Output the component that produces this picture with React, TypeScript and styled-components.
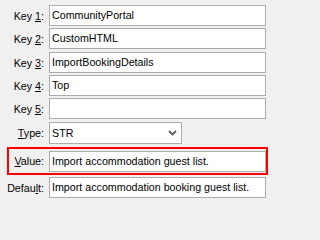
import React from "react";
import styled, { createGlobalStyle } from "styled-components";

const GlobalStyle = createGlobalStyle`
  html, body {
    margin: 0;
    padding: 0;
    background: #f0f0f0;
  }
  body {
    font-family: "Liberation Sans", Arial, sans-serif;
    font-size: 10.7px;
    color: #000;
  }
`;

const Form = styled.div`
  width: 271px;
  height: 202px;
  padding-top: 5px;
  box-sizing: border-box;
  display: flex;
  flex-direction: column;
`;

const Row = styled.div<{ $top?: number }>`
  display: grid;
  grid-template-columns: 49px 217px;
  align-items: center;
  margin-top: ${(p) => p.$top ?? 0}px;
`;

const Highlight = styled.div<{ $top?: number }>`
  margin-top: ${(p) => p.$top ?? 0}px;
  margin-left: 7px;
  width: 261px;
  height: 28px;
  box-sizing: border-box;
  border: 2px solid #ff0000;
  display: grid;
  grid-template-columns: 40px 217px;
  align-items: center;
`;

const Label = styled.label`
  justify-self: end;
  padding-right: 5px;
  white-space: nowrap;
`;

const Key = styled.span`
  text-decoration: underline;
  text-underline-offset: 1px;
`;

const TextBox = styled.div`
  height: 21px;
  box-sizing: border-box;
  border: 1px solid #acacac;
  background: #fff;
  padding: 0 2px;
  line-height: 19px;
  white-space: nowrap;
  overflow: hidden;
`;

const Combo = styled.div`
  width: 133px;
  height: 22px;
  box-sizing: border-box;
  border: 1px solid #acacac;
  background: #fff;
  padding: 0 2px;
  line-height: 20px;
  display: flex;
  justify-content: space-between;
  align-items: center;
`;

const Chevron = () => (
  <svg width="9" height="6" viewBox="0 0 9 6" style={{ marginRight: 2 }}>
    <path d="M1 1 L4.5 4.5 L8 1" fill="none" stroke="#5a5a5a" strokeWidth="1.8" />
  </svg>
);

const keys = [
  { n: "1", value: "CommunityPortal", top: 0 },
  { n: "2", value: "CustomHTML", top: 2 },
  { n: "3", value: "ImportBookingDetails", top: 3 },
  { n: "4", value: "Top", top: 2 },
  { n: "5", value: "", top: 2 },
];

export default function App() {
  return (
    <>
      <GlobalStyle />
      <Form>
        {keys.map((k) => (
          <Row key={k.n} $top={k.top}>
            <Label>
              Key <Key>{k.n}</Key>:
            </Label>
            <TextBox>{k.value}</TextBox>
          </Row>
        ))}
        <Row $top={3}>
          <Label>
            <Key>T</Key>ype:
          </Label>
          <Combo>
            <span>STR</span>
            <Chevron />
          </Combo>
        </Row>
        <Highlight $top={3}>
          <Label>
            <Key>V</Key>alue:
          </Label>
          <TextBox>Import accommodation guest list.</TextBox>
        </Highlight>
        <Row $top={2}>
          <Label>
            Defau<Key>l</Key>t:
          </Label>
          <TextBox>Import accommodation booking guest list.</TextBox>
        </Row>
      </Form>
    </>
  );
}
